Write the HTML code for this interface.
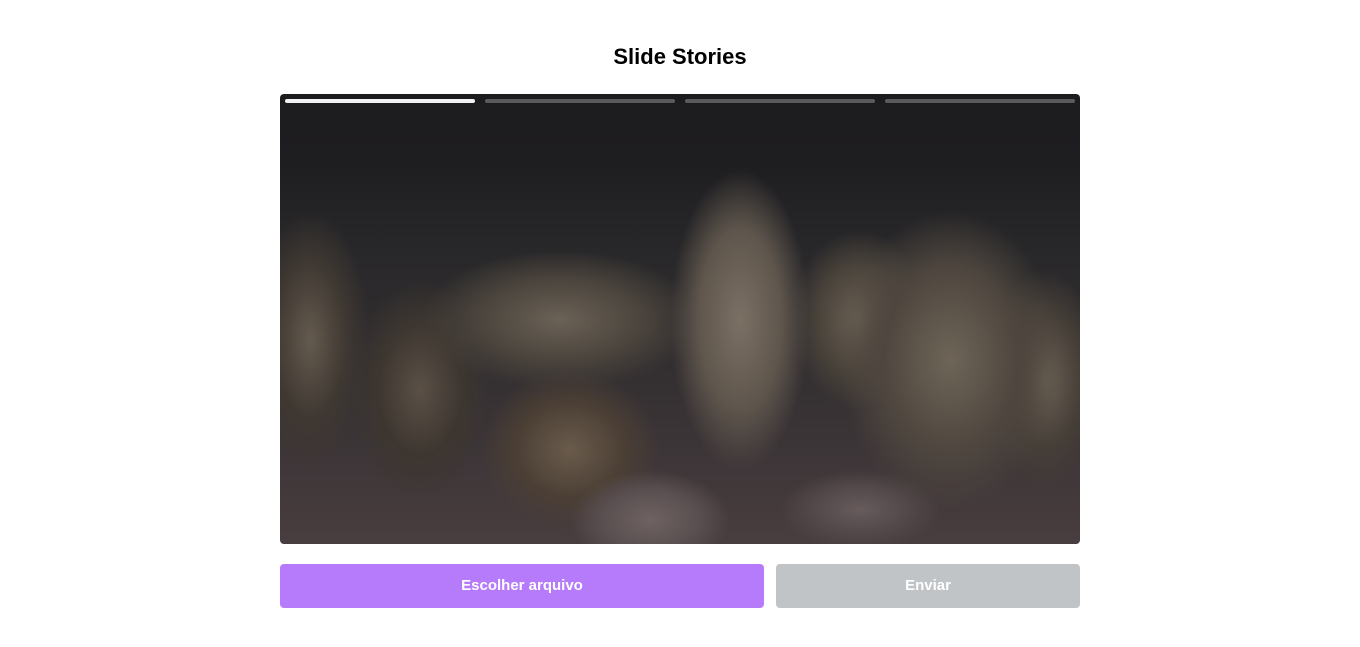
<!DOCTYPE html>
<html><head><meta charset="utf-8"><style>
html,body{margin:0;padding:0;background:#fff;width:1360px;height:647px;overflow:hidden;font-family:"Liberation Sans",sans-serif}
h1{position:absolute;top:41px;left:0;width:1360px;text-align:center;margin:0;font-size:22px;font-weight:bold;color:#000;line-height:32px}
.img{position:absolute;left:280px;top:94px;width:800px;height:450px;border-radius:4px;overflow:hidden;
background:
radial-gradient(ellipse 80px 50px at 650px 520px,#6e6262 0%,#5a4f50 60%,transparent 100%),
radial-gradient(ellipse 80px 40px at 860px 510px,#675b5c 0%,#524849 60%,transparent 100%),
radial-gradient(ellipse 70px 150px at 740px 320px,#7b7064 0%,#5e554c 60%,transparent 100%),
radial-gradient(ellipse 110px 150px at 950px 360px,#6e6558 0%,#4f473f 60%,transparent 100%),
radial-gradient(ellipse 90px 80px at 570px 450px,#6a5b4b 0%,#4b3f35 60%,transparent 100%),
radial-gradient(ellipse 140px 70px at 560px 320px,#6a6256 0%,#4a433c 60%,transparent 100%),
radial-gradient(ellipse 70px 110px at 420px 390px,#5a5046 0%,#3d3630 60%,transparent 100%),
radial-gradient(ellipse 60px 130px at 310px 340px,#645a4e 0%,#3f3832 60%,transparent 100%),
radial-gradient(ellipse 70px 90px at 860px 320px,#6a6154 0%,#4a433b 60%,transparent 100%),
radial-gradient(ellipse 60px 110px at 1045px 380px,#6a6054 0%,#463f38 60%,transparent 100%),
linear-gradient(180deg,#1a191b 0%,#1e1d20 25%,#29282a 40%,#353032 60%,#453b3d 80%,#54484a 100%);
background-position:-280px -94px;background-size:1360px 647px}
.bars{position:absolute;left:285px;top:99px}
.bar{position:absolute;top:0;width:190px;height:4px;border-radius:2px;background:#5a595b}
.bar.on{background:#f2f2f4}
.btn{position:absolute;top:564px;height:44px;border-radius:4px;color:#fff;font-size:15px;font-weight:bold;text-align:center;line-height:44px}
</style></head><body>
<h1>Slide Stories</h1>
<div class="img"></div>
<div class="bars">
<div class="bar on" style="left:0"></div>
<div class="bar" style="left:200px"></div>
<div class="bar" style="left:400px"></div>
<div class="bar" style="left:600px"></div>
</div>
<div class="btn" style="left:280px;width:484px;background:#b57bfa">Escolher arquivo</div>
<div class="btn" style="left:776px;width:304px;background:#c0c4c7">Enviar</div>
</body></html>
